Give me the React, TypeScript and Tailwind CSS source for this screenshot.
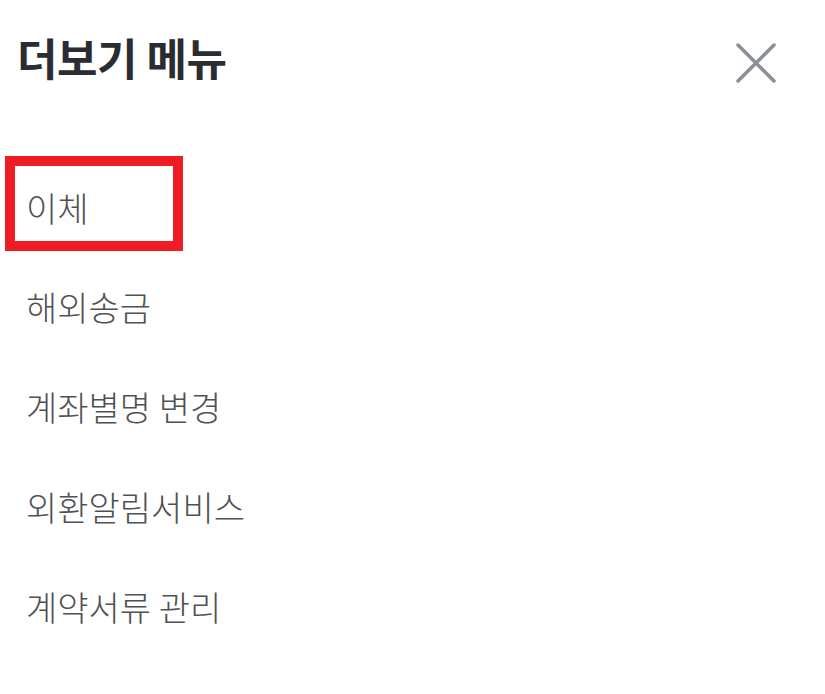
const font = { fontFamily: '"Noto Sans CJK KR", "Noto Sans", sans-serif' };

const items = ['이체', '해외송금', '계좌별명 변경', '외환알림서비스', '계약서류 관리'];

export default function App() {
  return (
    <div className="w-[825px] h-[694px] bg-white" style={font}>
      {/* Header */}
      <div className="flex items-start justify-between pl-[17px] pr-[47px] h-[156px]">
        <h1 className="mt-[28px] text-[44px] leading-[58px] font-bold text-[#2a2c31] tracking-[-0.5px]">
          더보기 메뉴
        </h1>
        <button type="button" className="mt-[41px] w-[44px] h-[44px] flex items-center justify-center">
          <svg width="44" height="44" viewBox="0 0 44 44" fill="none">
            <path d="M4 4L40 40M40 4L4 40" stroke="#8a8f98" strokeWidth={3.5} strokeLinecap="round" />
          </svg>
        </button>
      </div>

      {/* Menu list */}
      <ul>
        {items.map((label, i) => (
          <li key={label} className={`h-[100px] flex items-center ${i === 0 ? 'pl-[5px]' : 'pl-[26px]'}`}>
            {i === 0 ? (
              <div className="w-[178px] h-[95px] border-[10px] border-[#ee1c25] flex items-center pl-[11px] -mt-[5px]">
                <span className="text-[34px] font-light text-[#505153] mt-[8px]">{label}</span>
              </div>
            ) : (
              <span className="text-[34px] font-light text-[#505153]">{label}</span>
            )}
          </li>
        ))}
      </ul>
    </div>
  );
}
